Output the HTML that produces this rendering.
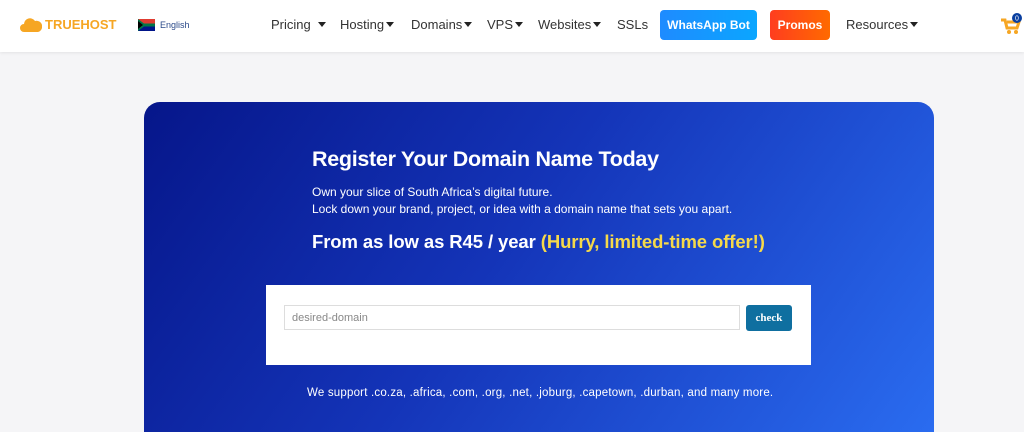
<!DOCTYPE html>
<html><head><meta charset="utf-8"><style>
*{box-sizing:border-box;margin:0;padding:0}
html,body{width:1024px;height:432px;overflow:hidden}
body{background:#f5f5f7;font-family:"Liberation Sans",sans-serif;position:relative}
.nav{position:absolute;left:0;top:0;width:1024px;height:52px;background:#fff;box-shadow:0 1px 3px rgba(0,0,0,.08)}
.abs{position:absolute}
.nl{position:absolute;top:17px;font-size:13px;color:#333}
.caret{display:inline-block;width:0;height:0;border-left:4px solid transparent;border-right:4px solid transparent;border-top:5px solid #222;vertical-align:2px;margin-left:2px}
.btn{position:absolute;top:10px;height:30px;border-radius:4px;color:#fff;font-weight:bold;font-size:12px;text-align:center;line-height:30px}
.card{position:absolute;left:144px;top:102px;width:790px;height:330px;border-radius:16px 16px 0 0;background:linear-gradient(125deg,#06168a 0%,#1434b8 45%,#2a6cf0 100%)}
</style></head><body>
<div class="nav">
 <svg class="abs" style="left:20px;top:17px" width="22" height="15" viewBox="0 0 22 15"><path d="M4 15a4 4 0 0 1 0-8 6 6 0 0 1 11-3 4.5 4.5 0 0 1 3 11z" fill="#f6a623"/></svg>
 <div class="abs" style="left:45px;top:17px;font-size:13px;font-weight:bold;color:#f6a623">TRUEHOST</div>
 <svg class="abs" style="left:138px;top:19px" width="17" height="12" viewBox="0 0 17 12"><rect width="17" height="6" fill="#e03c31"/><rect y="6" width="17" height="6" fill="#001489"/><path d="M0 0L8 6L0 12Z" fill="#007749"/><rect x="4" y="4.5" width="13" height="3" fill="#007749"/><path d="M0 2L5 6L0 10Z" fill="#000"/></svg>
 <div class="abs" style="left:160px;top:20px;font-size:9px;color:#2b4a8a">English</div>
 <div class="nl" style="left:271px">Pricing <span class="caret" style="margin-left:4px"></span></div>
 <div class="nl" style="left:340px">Hosting<span class="caret"></span></div>
 <div class="nl" style="left:411px">Domains<span class="caret"></span></div>
 <div class="nl" style="left:487px">VPS<span class="caret"></span></div>
 <div class="nl" style="left:538px">Websites<span class="caret"></span></div>
 <div class="nl" style="left:617px">SSLs</div>
 <div class="btn" style="left:660px;width:97px;background:linear-gradient(90deg,#1e8bff,#0ba6ff)">WhatsApp Bot</div>
 <div class="btn" style="left:770px;width:60px;background:linear-gradient(90deg,#ff3d1f,#ff6a00)">Promos</div>
 <div class="nl" style="left:846px">Resources<span class="caret"></span></div>
 <svg class="abs" style="left:1000px;top:12px" width="24" height="24" viewBox="0 0 24 24"><path d="M1 8h4l2 8h10l2-6H7" fill="none" stroke="#f6a623" stroke-width="3"/><circle cx="9" cy="20" r="2" fill="#f6a623"/><circle cx="16" cy="20" r="2" fill="#f6a623"/><circle cx="17" cy="6" r="5" fill="#0a3fa0"/><text x="17" y="8.5" font-size="7" fill="#fff" text-anchor="middle" font-family="Liberation Sans">0</text></svg>
</div>
<div class="card"></div>
<div class="abs" style="left:312px;top:147px;font-size:21.5px;font-weight:bold;color:#fff;letter-spacing:-0.3px">Register Your Domain Name Today</div>
<div class="abs" style="left:312px;top:184px;font-size:12px;color:#fff;line-height:17px">Own your slice of South Africa’s digital future.<br>Lock down your brand, project, or idea with a domain name that sets you apart.</div>
<div class="abs" style="left:312px;top:231px;font-size:18.5px;font-weight:bold;color:#fff;letter-spacing:-0.1px">From as low as R45 / year <span style="color:#f5d94a">(Hurry, limited-time offer!)</span></div>
<div class="abs" style="left:266px;top:285px;width:545px;height:80px;background:#fff"></div>
<div class="abs" style="left:284px;top:305px;width:456px;height:25px;border:1px solid #ddd;font-size:11px;color:#888;padding:6px 7px">desired-domain</div>
<div class="abs" style="left:746px;top:305px;width:46px;height:26px;background:#0f6fa0;border-radius:3px;color:#fff;font-size:11px;font-weight:bold;text-align:center;line-height:26px;font-family:'Liberation Serif',serif">check</div>
<div class="abs" style="left:307px;top:387px;font-size:11.5px;color:#fff;letter-spacing:0.2px">We support .co.za, .africa, .com, .org, .net, .joburg, .capetown, .durban, and many more.</div>
</body></html>
